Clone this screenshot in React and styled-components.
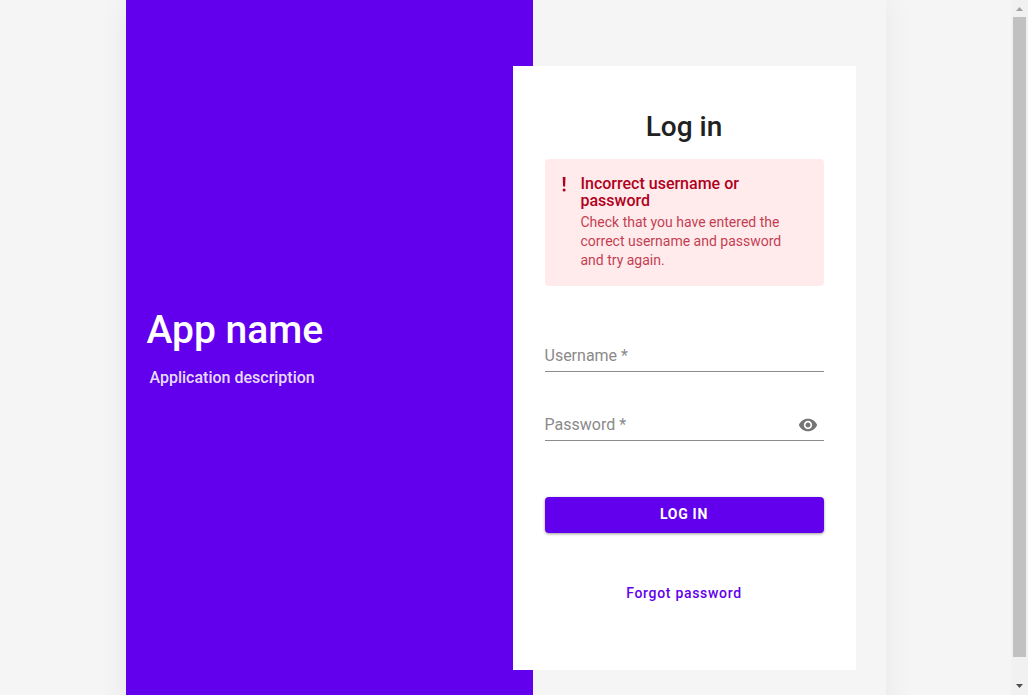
import React from "react";
import styled, { createGlobalStyle } from "styled-components";

const GlobalStyle = createGlobalStyle`
  *, *::before, *::after { box-sizing: border-box; }
  body {
    margin: 0;
    background: #f5f5f5;
    font-family: Roboto, "Liberation Sans", sans-serif;
    color: #212121;
  }
`;

const Viewport = styled.div`
  display: flex;
  height: 100vh;
  overflow: hidden;
`;

const Page = styled.main`
  flex: 1;
  display: flex;
  justify-content: center;
  align-items: flex-start;
`;

const Shell = styled.div`
  display: grid;
  grid-template-columns: 407fr 353fr;
  width: 100%;
  max-width: 760px;
  min-height: 736px;
  box-shadow: 0 0 30px rgba(0, 0, 0, 0.06);
`;

const Brand = styled.section`
  background: #6200ee;
  color: #fff;
`;

const BrandText = styled.div`
  display: flex;
  flex-direction: column;
  justify-content: center;
  gap: 14px;
  height: 100vh;
  padding: 0 21px 2px;
`;

const AppName = styled.h1`
  margin: 0;
  font-size: 39px;
  font-weight: 500;
  line-height: 48px;
`;

const Description = styled.p`
  margin: 0;
  padding-left: 3px;
  font-size: 16px;
  font-weight: 500;
  line-height: 20px;
  color: rgba(255, 255, 255, 0.87);
`;

const Content = styled.section`
  display: flex;
  align-items: center;
`;

const Card = styled.form`
  flex: 1;
  display: flex;
  flex-direction: column;
  min-height: 604px;
  margin: 0 30px 0 -20px;
  padding: 44px 32px 64px;
  background: #fff;
`;

const Title = styled.h2`
  margin: 0 0 15px;
  font-size: 28px;
  font-weight: 500;
  line-height: 34px;
  text-align: center;
`;

const Alert = styled.div`
  display: flex;
  gap: 14px;
  padding: 16px;
  border-radius: 4px;
  background: #ffebeb;
  color: #b00020;
`;

const AlertMark = styled.svg`
  flex: none;
  width: 6px;
  height: 18px;
`;

const AlertTitle = styled.h3`
  margin: 0 0 4px;
  font-size: 16px;
  font-weight: 500;
  line-height: 17px;
`;

const AlertText = styled.p`
  margin: 0;
  font-size: 14px;
  font-weight: 400;
  line-height: 19px;
  opacity: 0.75;
`;

const Fields = styled.div`
  display: flex;
  flex-direction: column;
  gap: 36px;
  margin: 53px 0 56px;
`;

const Field = styled.div`
  position: relative;
  display: flex;
  align-items: center;
  height: 33px;
  border-bottom: 1px solid #8c8c8c;
`;

const FieldLabel = styled.label`
  position: absolute;
  left: 0;
  bottom: 5px;
  font-size: 16px;
  font-weight: 400;
  line-height: 20px;
  color: #8a8a8a;
  pointer-events: none;
`;

const Input = styled.input`
  flex: 1;
  min-width: 0;
  height: 32px;
  padding: 0;
  border: 0;
  outline: 0;
  background: transparent;
  font: 400 16px Roboto, sans-serif;
  color: #212121;

  &:focus + ${FieldLabel},
  &:valid + ${FieldLabel} {
    transform: translateY(-20px);
    font-size: 12px;
  }
`;

const EyeButton = styled.button`
  display: flex;
  margin-right: 6px;
  padding: 2px 0 0;
  border: 0;
  background: none;
  color: #757575;
  cursor: pointer;
`;

const SubmitButton = styled.button`
  height: 36px;
  padding: 0 0 2px;
  border: 0;
  border-radius: 4px;
  background: #6200ee;
  box-shadow: 0 1px 3px rgba(0, 0, 0, 0.4);
  color: #fff;
  font: 700 14px/16px Roboto, sans-serif;
  letter-spacing: 0.05em;
  text-transform: uppercase;
  cursor: pointer;
`;

const ForgotLink = styled.a`
  align-self: center;
  margin-top: 50px;
  color: #6200ee;
  font-size: 14px;
  font-weight: 500;
  line-height: 20px;
  letter-spacing: 0.05em;
  text-decoration: none;
`;

const ScrollTrack = styled.div`
  flex: none;
  display: flex;
  flex-direction: column;
  width: 17px;
  background: #f1f1f1;
`;

const ScrollArrow = styled.svg`
  flex: none;
  width: 17px;
  height: 17px;
`;

const ScrollThumb = styled.div`
  flex: 640;
  margin: 0 2px;
  background: #c1c1c1;
`;

const ScrollRest = styled.div`
  flex: 21;
`;

export default function App() {
  const [visible, setVisible] = React.useState(false);
  return (
    <>
      <GlobalStyle />
      <Viewport>
        <Page>
          <Shell>
            <Brand>
              <BrandText>
                <AppName>App name</AppName>
                <Description>Application description</Description>
              </BrandText>
            </Brand>
            <Content>
              <Card noValidate onSubmit={(e) => e.preventDefault()}>
                <Title>Log in</Title>
                <Alert role="alert">
                  <AlertMark viewBox="0 0 6 18" fill="currentColor" aria-hidden="true">
                    <path d="M1.700 2h2.800l-.4 9.500H2.100z" />
                    <circle cx="3.100" cy="15" r="1.500" />
                  </AlertMark>
                  <div>
                    <AlertTitle>Incorrect username or password</AlertTitle>
                    <AlertText>
                      Check that you have entered the correct username and password and try again.
                    </AlertText>
                  </div>
                </Alert>
                <Fields>
                  <Field>
                    <Input id="username" type="text" required />
                    <FieldLabel htmlFor="username">Username *</FieldLabel>
                  </Field>
                  <Field>
                    <Input id="password" type={visible ? "text" : "password"} required />
                    <FieldLabel htmlFor="password">Password *</FieldLabel>
                    <EyeButton type="button" aria-label="Show password" onClick={() => setVisible(!visible)}>
                      <svg width="20" height="20" viewBox="0 0 24 24" fill="currentColor">
                        <path d="M12 4.500C7 4.500 2.730 7.610 1 12c1.730 4.390 6 7.500 11 7.500s9.270-3.110 11-7.500c-1.730-4.390-6-7.500-11-7.500zM12 17c-2.760 0-5-2.240-5-5s2.240-5 5-5 5 2.240 5 5-2.240 5-5 5zm0-8c-1.660 0-3 1.340-3 3s1.340 3 3 3 3-1.340 3-3-1.340-3-3-3z" />
                      </svg>
                    </EyeButton>
                  </Field>
                </Fields>
                <SubmitButton type="submit">Log in</SubmitButton>
                <ForgotLink href="#forgot">Forgot password</ForgotLink>
              </Card>
            </Content>
          </Shell>
        </Page>
        <ScrollTrack aria-hidden="true">
          <ScrollArrow viewBox="0 0 17 17" fill="#a3a3a3">
            <path d="M5 11h7L8.500 7z" />
          </ScrollArrow>
          <ScrollThumb />
          <ScrollRest />
          <ScrollArrow viewBox="0 0 17 17" fill="#505050">
            <path d="M5 6h7l-3.500 4z" />
          </ScrollArrow>
        </ScrollTrack>
      </Viewport>
    </>
  );
}
